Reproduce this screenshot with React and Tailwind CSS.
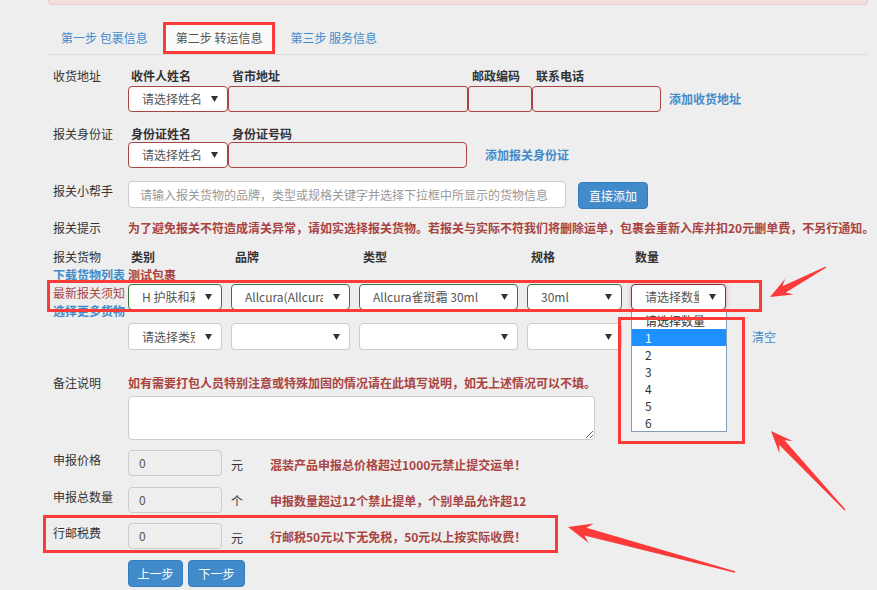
import React from "react";

function Arrow() {
  return (
    <svg width="7" height="6" viewBox="0 0 7 6" className="absolute right-[9px] top-1/2 -translate-y-1/2">
      <polygon points="0,0 7,0 3.5,6" fill="#333" />
    </svg>
  );
}

function Sel({ className, text }) {
  return (
    <div className={`relative flex items-center rounded-[4px] border bg-white pl-[13px] pr-[26px] ${className}`}>
      <span className="overflow-hidden whitespace-nowrap text-[#555]">{text}</span>
      <Arrow />
    </div>
  );
}

function Label({ children, className = "" }) {
  return <div className={`w-[75px] shrink-0 text-[#333] ${className}`}>{children}</div>;
}

function ReadBox() {
  return (
    <div className="flex h-[26px] w-[94px] items-center rounded-[4px] border border-[#ccc] bg-[#eee] pl-[10px] text-[#555]">
      0
    </div>
  );
}

export default function App() {
  const red = "text-[#a94442] font-bold";
  return (
    <div className="relative h-[590px] w-[877px] overflow-hidden bg-[#eeeeee] text-[12px] font-['Noto_Sans_CJK_SC',sans-serif] text-[#333]">
      {/* alert box bottom edge */}
      <div className="ml-[48px] h-[5px] w-[820px] rounded-b-[4px] border border-t-0 border-[#ebccd1] bg-[#f2dede]" />

      <div className="ml-[48px] w-[820px]">
        {/* tabs */}
        <div className="mt-[17px] flex h-[33px] items-stretch border-b border-[#ddd]">
          <div className="mr-[2px] flex items-center px-[13px] text-[#428bca]">第一步 包裹信息</div>
          <div className="mr-[2px] flex items-center border-[3px] border-[#fb3a3a] bg-[#fafafa] px-[10px] text-[#555]">
            第二步 转运信息
          </div>
          <div className="flex items-center px-[13px] text-[#428bca]">第三步 服务信息</div>
        </div>

        <div className="pl-[5px]">
          {/* 收货地址 */}
          <div className="mt-[13px] flex items-start">
            <Label className="leading-[16px]">收货地址</Label>
            <div className="flex flex-col">
              <div className="h-[16px] pl-[3px] font-bold leading-[16px]">收件人姓名</div>
              <Sel className="mt-[2px] h-[26px] w-[100px] border-[#a94442]" text="请选择姓名" />
            </div>
            <div className="flex flex-col">
              <div className="h-[16px] pl-[4px] font-bold leading-[16px]">省市地址</div>
              <div className="mt-[2px] h-[26px] w-[240px] rounded-[3px] border border-[#a94442]" />
            </div>
            <div className="flex flex-col">
              <div className="h-[16px] pl-[4px] font-bold leading-[16px]">邮政编码</div>
              <div className="mt-[2px] h-[26px] w-[64px] rounded-[3px] border border-[#a94442]" />
            </div>
            <div className="flex flex-col">
              <div className="h-[16px] pl-[4px] font-bold leading-[16px]">联系电话</div>
              <div className="mt-[2px] h-[26px] w-[129px] rounded-[4px] border border-[#a94442]" />
            </div>
            <a className="ml-[8px] self-end font-bold leading-[26px] text-[#428bca]">添加收货地址</a>
          </div>

          {/* 报关身份证 */}
          <div className="mt-[14px] flex items-start">
            <Label className="leading-[16px]">报关身份证</Label>
            <div className="flex flex-col">
              <div className="h-[16px] pl-[3px] font-bold leading-[16px]">身份证姓名</div>
              <Sel className="h-[26px] w-[100px] border-[#a94442]" text="请选择姓名" />
            </div>
            <div className="flex flex-col">
              <div className="h-[16px] pl-[4px] font-bold leading-[16px]">身份证号码</div>
              <div className="h-[26px] w-[239px] rounded-[4px] border border-[#a94442]" />
            </div>
            <a className="ml-[18px] self-end font-bold leading-[26px] text-[#428bca]">添加报关身份证</a>
          </div>

          {/* 报关小帮手 */}
          <div className="mt-[13px] flex items-start">
            <Label className="leading-[20px]">报关小帮手</Label>
            <div className="flex h-[27px] w-[438px] items-center overflow-hidden whitespace-nowrap rounded-[4px] border border-[#ccc] bg-white pl-[11px] text-[#999]">
              请输入报关货物的品牌，类型或规格关键字并选择下拉框中所显示的货物信息
            </div>
            <button className="ml-[12px] mt-[1px] h-[27px] w-[70px] rounded-[4px] border border-[#357ebd] bg-[#428bca] text-white">
              直接添加
            </button>
          </div>

          {/* 报关提示 */}
          <div className="mt-[11px] flex items-start leading-[16px]">
            <Label>报关提示</Label>
            <div className={`whitespace-nowrap ${red}`}>
              为了避免报关不符造成清关异常，请如实选择报关货物。若报关与实际不符我们将删除运单，包裹会重新入库并扣20元删单费，不另行通知。
            </div>
          </div>

          {/* 报关货物 */}
          <div className="mt-[12px] flex items-start">
            <Label className="leading-[18px]">
              <div>报关货物</div>
              <div className="font-bold text-[#428bca]">下载货物列表</div>
              <div className="text-[#a94442]">最新报关须知</div>
              <div className="font-bold text-[#428bca]">选择更多货物</div>
            </Label>
            <div className="flex flex-col">
              <div className="flex gap-[9px] leading-[18px]">
                <div className="w-[94px]">
                  <div className="pl-[3px] font-bold">类别</div>
                  <div className="h-[18px] font-bold text-[#a94442]">测试包裹</div>
                </div>
                <div className="w-[119px] pl-[4px] font-bold">品牌</div>
                <div className="w-[159px] pl-[4px] font-bold">类型</div>
                <div className="w-[95px] pl-[4px] font-bold">规格</div>
                <div className="w-[95px] pl-[4px] font-bold">数量</div>
              </div>
              <div className="flex gap-[9px]">
                <Sel className="h-[26px] w-[94px] border-[#3c763d]" text="H 护肤和彩妆" />
                <Sel className="h-[26px] w-[119px] border-[#3c763d]" text="Allcura(Allcura)" />
                <Sel className="h-[26px] w-[159px] border-[#3c763d]" text="Allcura雀斑霜 30ml" />
                <Sel className="h-[26px] w-[95px] border-[#3c763d]" text="30ml" />
                <Sel className="h-[26px] w-[95px] border-[#843534] shadow-[0_0_5px_rgba(169,68,66,0.45)]" text="请选择数量" />
              </div>
              <div className="mt-[13px] flex items-center gap-[9px]">
                <Sel className="h-[27px] w-[94px] border-[#ccc]" text="请选择类别" />
                <Sel className="h-[27px] w-[119px] border-[#ccc]" text="" />
                <Sel className="h-[27px] w-[159px] border-[#ccc]" text="" />
                <Sel className="h-[27px] w-[95px] border-[#ccc]" text="" />
                <div className="w-[95px]" />
                <a className="ml-[17px] leading-[27px] text-[#428bca]">清空</a>
              </div>
            </div>
          </div>

          {/* 备注说明 */}
          <div className="mt-[25px] flex items-start leading-[16px]">
            <Label>备注说明</Label>
            <div className="flex flex-col">
              <div className={`whitespace-nowrap ${red}`}>
                如有需要打包人员特别注意或特殊加固的情况请在此填写说明，如无上述情况可以不填。
              </div>
              <textarea
                readOnly
                className="mt-[5px] h-[44px] w-[467px] rounded-[4px] border border-[#ccc] bg-white"
              />
            </div>
          </div>

          {/* 申报价格 */}
          <div className="mt-[10px] flex items-start">
            <Label className="leading-[20px]">申报价格</Label>
            <ReadBox />
            <span className="ml-[9px] mt-[2px] leading-[26px]">元</span>
            <span className={`ml-[27px] mt-[2px] leading-[26px] ${red}`}>混装产品申报总价格超过1000元禁止提交运单！</span>
          </div>

          {/* 申报总数量 */}
          <div className="mt-[9px] flex items-start">
            <Label className="leading-[20px]">申报总数量</Label>
            <ReadBox />
            <span className="ml-[9px] mt-[1px] leading-[26px]">个</span>
            <span className={`ml-[27px] mt-[1px] leading-[26px] ${red}`}>申报数量超过12个禁止提单，个别单品允许超12</span>
          </div>

          {/* 行邮税费 */}
          <div className="mt-[9px] flex items-start">
            <Label className="leading-[20px]">行邮税费</Label>
            <ReadBox />
            <span className="ml-[9px] mt-[2px] leading-[26px]">元</span>
            <span className={`ml-[27px] mt-[1px] leading-[26px] ${red}`}>行邮税50元以下无免税，50元以上按实际收费！</span>
          </div>

          {/* buttons */}
          <div className="mt-[9px] flex gap-[5px] pl-[75px]">
            <button className="h-[27px] w-[55px] rounded-[4px] border border-[#357ebd] bg-[#428bca] text-white">上一步</button>
            <button className="h-[27px] w-[57px] rounded-[4px] border border-[#357ebd] bg-[#428bca] text-white">下一步</button>
          </div>
        </div>
      </div>

      {/* open dropdown list */}
      <div className="absolute left-[631px] top-[311px] h-[121px] w-[96px] border border-[#7f9db9] bg-white text-[#333] leading-[17px]">
        <div className="h-[17px] pl-[13px]">请选择数量</div>
        <div className="h-[17px] bg-[#1e90ff] pl-[13px] text-white">1</div>
        <div className="h-[17px] pl-[13px]">2</div>
        <div className="h-[17px] pl-[13px]">3</div>
        <div className="h-[17px] pl-[13px]">4</div>
        <div className="h-[17px] pl-[13px]">5</div>
        <div className="h-[17px] pl-[13px]">6</div>
      </div>

      {/* annotation boxes */}
      <div className="pointer-events-none absolute left-[47px] top-[280px] h-[32px] w-[715px] border-[3px] border-[#fb3a3a]" />
      <div className="pointer-events-none absolute left-[618px] top-[317px] h-[127px] w-[127px] border-[3px] border-[#fb3a3a]" />
      <div className="pointer-events-none absolute left-[43px] top-[515px] h-[38px] w-[515px] border-[3px] border-[#fb3a3a]" />

      {/* annotation arrows */}
      <svg className="pointer-events-none absolute left-0 top-0" width="877" height="590">
        <polygon
          fill="#fb3a3a"
          points="770,297 793.6,294.5 785.8,292.5 826.3,267.6 825.7,266.4 782.4,286.3 785.2,278.7"
        />
        <polygon
          fill="#fb3a3a"
          points="771,431 792.6,440.9 784.5,440.3 845.5,509.5 844.5,510.5 779.3,445.1 779.4,453.3"
        />
        <polygon
          fill="#fb3a3a"
          points="568,527 593.8,523.6 586.4,527.8 735.2,571.3 734.8,572.7 584.4,535.6 588.6,542.9"
        />
      </svg>
    </div>
  );
}
